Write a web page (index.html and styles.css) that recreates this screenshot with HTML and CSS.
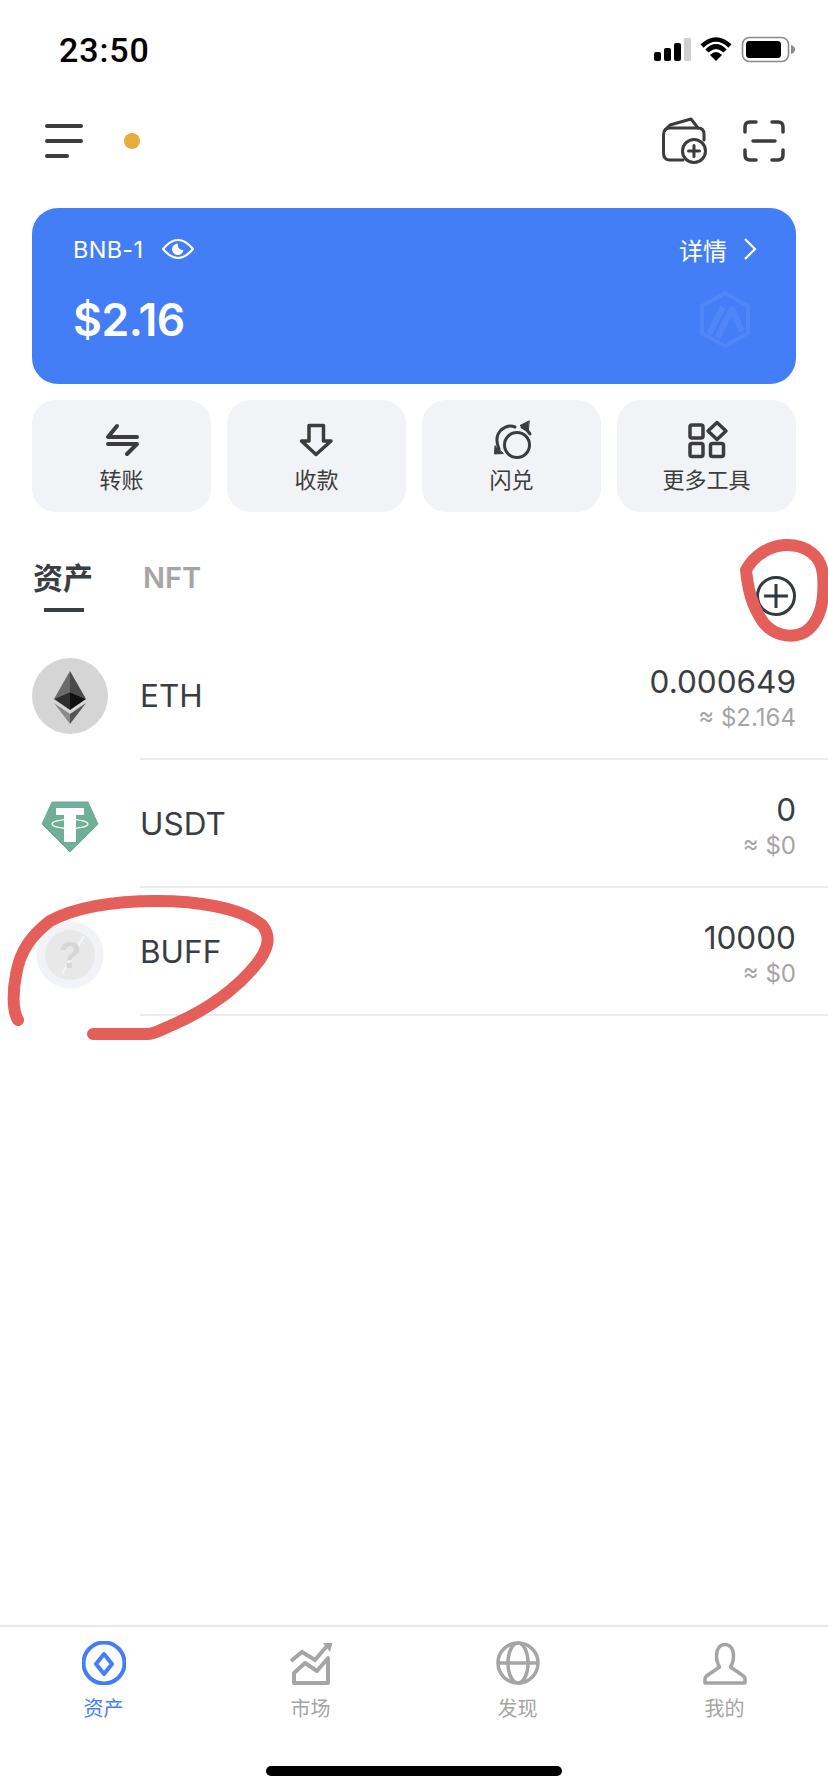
FILE: index.html
```html
<!DOCTYPE html>
<html lang="zh">
<head>
<meta charset="utf-8">
<title>资产</title>
<link rel="stylesheet" href="styles.css">
</head>
<body>
<div class="page">
  <div class="status">
    <span class="time">23:50</span>
    <svg class="status-icons" viewBox="650 34 148 32">
      <rect x="654" y="52" width="7" height="9" rx="2"/>
      <rect x="664" y="48" width="7" height="13" rx="2"/>
      <rect x="674" y="43" width="7" height="18" rx="2"/>
      <rect x="684" y="38" width="7" height="23" rx="1" fill="#cfcfcf"/>
      <path d="M702 46 Q716 33 730 46" fill="none" stroke="#000" stroke-width="4.5"/>
      <path d="M707 51 Q716 42 725 51" fill="none" stroke="#000" stroke-width="4.5"/>
      <path d="M710 55 Q716 49 722 55 L716 61 Z"/>
      <rect x="742.500" y="37.500" width="46" height="24" rx="7" fill="none" stroke="#8a8a8a" stroke-width="1.6"/>
      <rect x="746" y="41" width="35" height="17" rx="3.5"/>
      <path d="M791 45 Q795 46 795 49.500 Q795 53 791 54 Z" fill="#8a8a8a"/>
    </svg>
  </div>

  <div class="topbar">
    <div class="menu">
      <span class="menu-line"></span>
      <span class="menu-line"></span>
      <span class="menu-line menu-line-short"></span>
    </div>
    <span class="dot"></span>
    <div class="top-actions">
      <svg class="top-icon" viewBox="660 116 48 50" fill="none" stroke="#3c3c3c" stroke-width="3" stroke-linecap="round" stroke-linejoin="round">
        <path d="M683 160 H670 Q663.500 160 663.500 153 V135 Q663.500 128 670 128 H698 Q704 128 704 134 V140"/>
        <path d="M665 130 L670 125 L691 119 L698 128"/>
        <circle cx="694" cy="151" r="11.500"/>
        <path d="M694 145.500 V156.500 M688.500 151 H699.500"/>
      </svg>
      <svg class="top-icon top-icon-scan" viewBox="742 118 44 44" fill="none" stroke="#3c3c3c" stroke-width="3.500" stroke-linecap="round">
        <path d="M745 131 V126 Q745 121 750 121 H756"/>
        <path d="M772 121 H778 Q783 121 783 126 V131"/>
        <path d="M745 149 V154 Q745 159 750 159 H756"/>
        <path d="M772 159 H778 Q783 159 783 154 V149"/>
        <path d="M753 140 H775"/>
      </svg>
    </div>
  </div>

  <section class="card">
    <div class="card-row">
      <div class="card-name">
        <span>BNB-1</span>
        <svg class="eye" viewBox="162 236 32 26" fill="none" stroke="#fff" stroke-width="2.200">
          <path d="M163 249 Q178 231 193 249 Q178 267 163 249 Z"/>
          <path d="M178 243.500 A5.800 5.800 0 1 0 183.600 250 A5 5 0 0 1 178 243.500 Z" fill="#fff" stroke="none"/>
        </svg>
      </div>
      <div class="card-detail">
        <span>详情</span>
        <svg class="chevron" viewBox="742 236 16 24" fill="none" stroke="#fff" stroke-width="2.200">
          <path d="M745 238 L755 248 L745 258"/>
        </svg>
      </div>
    </div>
    <div class="card-row card-row-bottom">
      <span class="balance">$2.16</span>
      <svg class="chain" viewBox="698 290 52 60" fill="none" stroke="#4f86f8" stroke-width="4">
        <path d="M724 293 L747 306 V333 L724 346 L701 333 V306 Z"/>
        <path d="M708 334 L722 307 M716 338 L730 311" stroke-width="6"/>
        <path d="M730 307 L741 331" stroke-width="6"/>
      </svg>
    </div>
  </section>

  <nav class="actions">
    <div class="action">
      <svg class="action-icon" viewBox="100 420 44 40" fill="none" stroke="#3c3c3c" stroke-width="4" stroke-linecap="round" stroke-linejoin="round">
        <path d="M117 426 L108 437 H137"/>
        <path d="M108 444 H137 L127 454"/>
      </svg>
      <span class="action-label">转账</span>
    </div>
    <div class="action">
      <svg class="action-icon" viewBox="295 420 44 40" fill="none" stroke="#3c3c3c" stroke-width="3.500" stroke-linejoin="round">
        <path d="M309 425.500 H323.500 V441 H331 L316 454.500 L301.500 441 H309 Z"/>
      </svg>
      <span class="action-label">收款</span>
    </div>
    <div class="action">
      <svg class="action-icon" viewBox="490 420 44 40" fill="none" stroke="#3c3c3c" stroke-width="3" stroke-linecap="round">
        <circle cx="517" cy="445" r="12.500"/>
        <path d="M499 449 Q494 437 501 430 Q508 424 515 427"/>
        <path d="M522 427 Q527 429 530 434"/>
        <path d="M529 421 L520 425.500 L528 430 Z" fill="#3c3c3c" stroke-width="1"/>
        <path d="M495 446 L494.500 454 L503 453.500 Z" fill="#3c3c3c" stroke-width="1"/>
      </svg>
      <span class="action-label">闪兑</span>
    </div>
    <div class="action">
      <svg class="action-icon" viewBox="685 420 44 40" fill="none" stroke="#3c3c3c" stroke-width="3.500" stroke-linejoin="round">
        <rect x="690" y="425" width="13" height="13" rx="2"/>
        <rect x="690" y="443.500" width="13" height="13" rx="2"/>
        <rect x="710.500" y="443.500" width="13" height="13" rx="2"/>
        <path d="M717 422.500 L726 431 L717 439.500 L708 431 Z"/>
      </svg>
      <span class="action-label">更多工具</span>
    </div>
  </nav>

  <div class="tabs">
    <div class="tab tab-active">
      <span>资产</span>
      <span class="tab-line"></span>
    </div>
    <div class="tab tab-muted">NFT</div>
    <svg class="add" viewBox="754 574 44 44" fill="none" stroke="#333a40" stroke-width="3">
      <circle cx="776" cy="596" r="18.500"/>
      <path d="M764 596 H788 M776 584 V608"/>
    </svg>
  </div>

  <ul class="assets">
    <li class="asset">
      <svg class="coin" viewBox="32 656 76 76">
        <circle cx="70" cy="694" r="38" fill="#d5d5d5"/>
        <path d="M70 669 L54 697 L70 690 Z" fill="#6a6a6a"/>
        <path d="M70 669 L86 697 L70 690 Z" fill="#4a4a4a"/>
        <path d="M54 697 L70 690 V708 Z" fill="#2e2e2e"/>
        <path d="M86 697 L70 690 V708 Z" fill="#111"/>
        <path d="M54 701 L70 712 V722 Z" fill="#8a8a8a"/>
        <path d="M86 701 L70 712 V722 Z" fill="#555"/>
      </svg>
      <div class="asset-body">
        <span class="asset-name">ETH</span>
        <div class="asset-values">
          <span class="amount">0.000649</span>
          <span class="fiat">≈ $2.164</span>
        </div>
      </div>
    </li>
    <li class="asset">
      <svg class="coin" viewBox="32 786 76 76">
        <path d="M52 802 H88 L98 824 L70 852 L42 824 Z" fill="#6fae97" stroke="#6fae97" stroke-width="1" stroke-linejoin="round"/>
        <path d="M56 808 H84 V815 H76 V842 H64 V815 H56 Z" fill="#fff"/>
        <ellipse cx="70" cy="824" rx="18" ry="4.500" fill="none" stroke="#fff" stroke-width="1.200"/>
      </svg>
      <div class="asset-body">
        <span class="asset-name">USDT</span>
        <div class="asset-values">
          <span class="amount">0</span>
          <span class="fiat">≈ $0</span>
        </div>
      </div>
    </li>
    <li class="asset">
      <svg class="coin" viewBox="32 908 76 76">
        <circle cx="70" cy="949" r="33.500" fill="#f1f3f6"/>
        <circle cx="70" cy="949" r="25" fill="#e8e8e8"/>
        <path d="M84 930 L62 968" stroke="#f6f6f6" stroke-width="2"/>
        <text class="coin-mark" x="70" y="962" text-anchor="middle">?</text>
      </svg>
      <div class="asset-body">
        <span class="asset-name">BUFF</span>
        <div class="asset-values">
          <span class="amount">10000</span>
          <span class="fiat">≈ $0</span>
        </div>
      </div>
    </li>
  </ul>

  <div class="spacer"></div>

  <footer class="footer">
    <nav class="tabbar">
      <div class="tabbar-item tabbar-item-active">
        <svg class="tabbar-icon" viewBox="81 1641 44 44" fill="none" stroke="#447ef7" stroke-width="4" stroke-linejoin="round">
          <circle cx="103" cy="1663" r="20.500"/>
          <path d="M103 1654 L111 1664 L103 1674 L95 1664 Z"/>
        </svg>
        <span class="tabbar-label">资产</span>
      </div>
      <div class="tabbar-item">
        <svg class="tabbar-icon" viewBox="288 1641 44 44" fill="none" stroke="#a5a5a5" stroke-width="4">
          <path d="M290 1661 L301 1652 L314 1660 L326 1646"/>
          <path d="M322 1643 H331.500 L329 1652 Z" fill="#a5a5a5" stroke="none"/>
          <path d="M293 1673 L304 1663 L316 1671 L327 1658 V1683 H293 Z" stroke-linejoin="round"/>
        </svg>
        <span class="tabbar-label">市场</span>
      </div>
      <div class="tabbar-item">
        <svg class="tabbar-icon" viewBox="495 1641 44 44" fill="none" stroke="#a5a5a5" stroke-width="3.500">
          <circle cx="517" cy="1663" r="20"/>
          <ellipse cx="517" cy="1663" rx="10" ry="20"/>
          <path d="M497 1663 H537"/>
        </svg>
        <span class="tabbar-label">发现</span>
      </div>
      <div class="tabbar-item">
        <svg class="tabbar-icon" viewBox="702 1641 44 44" fill="none" stroke="#a5a5a5" stroke-width="3.500" stroke-linejoin="round">
          <path d="M724 1644.500 C719 1644.500 715.500 1649 715.500 1655 C715.500 1660 716.500 1664 718.500 1667 L705.500 1676 Q704 1677.500 704 1679 V1683 H744 V1679 Q744 1677.500 742.500 1676 L729.500 1667 C731.500 1664 732.500 1660 732.500 1655 C732.500 1649 729 1644.500 724 1644.500 Z"/>
        </svg>
        <span class="tabbar-label">我的</span>
      </div>
    </nav>
    <div class="home-bar"></div>
  </footer>

  <svg class="scribbles" viewBox="0 0 828 1792" fill="none" stroke="#e55f5a" stroke-width="12" stroke-linecap="round" stroke-linejoin="round">
    <path d="M746 570 C754 556 768 546 785 545 C806 544 821 556 823 574 C825 600 820 622 805 632 C790 640 772 634 763 622 C752 606 748 590 746 570 Z"/>
    <path d="M18 1020 C12 1010 13 990 16 975 C20 950 32 935 50 921 C80 905 120 901 157 901 C195 901 240 907 262 925 C272 937 268 950 255 966 C235 990 205 1011 170 1026 C160 1030 155 1034 147 1034 L93 1034"/>
  </svg>
</div>
</body>
</html>
```

FILE: styles.css
```css
* {
  box-sizing: border-box;
}

html,
body {
  margin: 0;
  padding: 0;
  background: #fff;
}

body {
  font-family: Inter, "Noto Sans CJK SC", sans-serif;
  color: #3a3d42;
}

.page {
  position: relative;
  width: 828px;
  height: 1792px;
  display: flex;
  flex-direction: column;
  overflow: hidden;
}

.status {
  height: 100px;
  padding: 34px 30px 0 59px;
  display: flex;
  justify-content: space-between;
  align-items: flex-start;
}

.time {
  font-family: Roboto, sans-serif;
  font-weight: 500;
  font-size: 34px;
  line-height: 32px;
  letter-spacing: 0.9px;
  color: #000;
}

.status-icons {
  width: 148px;
  height: 32px;
}

.topbar {
  height: 82px;
  padding: 0 42px 0 45px;
  display: flex;
  align-items: center;
}

.menu {
  width: 38px;
  display: flex;
  flex-direction: column;
  gap: 11px;
}

.menu-line {
  display: block;
  height: 4px;
  border-radius: 2px;
  background: #3c3c3c;
}

.menu-line-short {
  width: 24px;
}

.dot {
  width: 16px;
  height: 16px;
  margin-left: 41px;
  border-radius: 50%;
  background: #e4ad3e;
}

.top-actions {
  margin-left: auto;
  display: flex;
  align-items: center;
  gap: 34px;
}

.top-icon {
  width: 48px;
  height: 50px;
}

.top-icon-scan {
  width: 44px;
  height: 44px;
}

.card {
  height: 176px;
  margin: 26px 32px 0;
  padding: 27px 40px 0 41px;
  border-radius: 26px;
  background: #447ef7;
  color: #fff;
}

.card-row {
  display: flex;
  justify-content: space-between;
  align-items: center;
  height: 28px;
}

.card-row-bottom {
  height: 60px;
  margin-top: 27px;
}

.card-name {
  display: flex;
  align-items: center;
  gap: 19px;
  font-size: 23.500px;
  letter-spacing: 0.3px;
}

.eye {
  width: 32px;
  height: 26px;
}

.card-detail {
  display: flex;
  align-items: center;
  gap: 15px;
  font-size: 24px;
}

.chevron {
  width: 16px;
  height: 24px;
  margin-right: -2px;
}

.balance {
  font-size: 44.500px;
  font-weight: 600;
  letter-spacing: -0.5px;
}

.chain {
  width: 52px;
  height: 60px;
  margin-right: 5px;
}

.actions {
  margin: 16px 32px 0;
  display: grid;
  grid-template-columns: repeat(4, 1fr);
  gap: 16px;
}

.action {
  height: 112px;
  padding-top: 20px;
  border-radius: 24px;
  background: #f2f3f7;
  display: flex;
  flex-direction: column;
  align-items: center;
}

.action-icon {
  width: 44px;
  height: 40px;
}

.action-label {
  margin-top: 6px;
  font-size: 22px;
  line-height: 28px;
  color: #3c3c3c;
}

.tabs {
  height: 120px;
  padding: 50px 30px 0 33px;
  display: flex;
  align-items: flex-start;
  gap: 50px;
}

.tab {
  font-size: 30px;
  line-height: 32px;
  font-weight: 600;
}

.tab-active {
  display: flex;
  flex-direction: column;
  align-items: center;
}

.tab-muted {
  font-size: 29px;
  color: #a5a5a5;
}

.tab-line {
  display: block;
  width: 40px;
  height: 4px;
  margin-top: 14px;
  margin-left: 2px;
  background: #3a3d42;
}

.add {
  width: 44px;
  height: 44px;
  margin-top: 12px;
  margin-left: auto;
}

.assets {
  margin: 0;
  padding: 0;
  list-style: none;
}

.asset {
  height: 128px;
  padding-left: 32px;
  display: flex;
  align-items: center;
}

.coin {
  flex: none;
  width: 76px;
  height: 76px;
}

.coin-mark {
  font-family: "Liberation Sans", sans-serif;
  font-size: 36px;
  font-weight: 700;
  fill: #d6d6d6;
}

.asset-body {
  flex: 1;
  height: 100%;
  margin-left: 32px;
  padding: 0 32px 0 0;
  border-bottom: 2px solid #ececec;
  display: flex;
  justify-content: space-between;
  align-items: center;
}

.asset-name {
  font-size: 31.500px;
}

.asset-values {
  display: flex;
  flex-direction: column;
  align-items: flex-end;
  gap: 4px;
  padding-top: 3px;
}

.amount {
  font-size: 31.500px;
  line-height: 38px;
}

.fiat {
  font-size: 24px;
  line-height: 26px;
  color: #a5a5a5;
}

.spacer {
  flex: 1;
}

.footer {
  height: 167px;
  border-top: 2px solid #e8e8e8;
  padding-top: 14px;
}

.tabbar {
  display: grid;
  grid-template-columns: repeat(4, 1fr);
}

.tabbar-item {
  display: flex;
  flex-direction: column;
  align-items: center;
  color: #a5a5a5;
}

.tabbar-item-active {
  color: #447ef7;
}

.tabbar-icon {
  width: 44px;
  height: 44px;
}

.tabbar-label {
  margin-top: 12px;
  font-size: 20px;
  line-height: 24px;
}

.home-bar {
  width: 296px;
  height: 10px;
  margin: 45px auto 0;
  border-radius: 5px;
  background: #000;
}

.scribbles {
  position: absolute;
  top: 0;
  left: 0;
  width: 828px;
  height: 1792px;
  pointer-events: none;
}
```
